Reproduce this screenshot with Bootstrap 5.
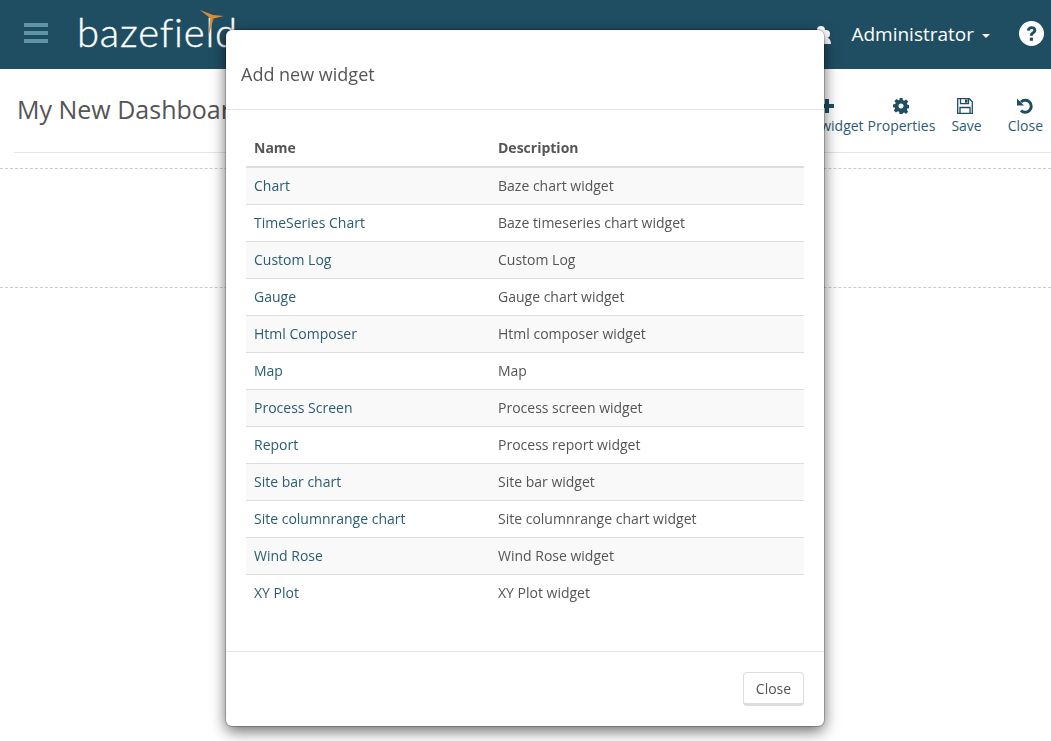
<!DOCTYPE html>
<html lang="en">
<head>
    <meta charset="UTF-8" />
    <meta name="viewport" content="width=device-width, initial-scale=1" />
    <title>Add new widget</title>
    <link href="https://cdn.jsdelivr.net/npm/bootstrap@5.3.3/dist/css/bootstrap.min.css" rel="stylesheet" />
    <style>
        body {
            font-family: "Open Sans", "Liberation Sans", sans-serif;
            font-size: 14px;
            color: #555;
            background: #fff;
            overflow: hidden;
        }
        .top-bar {
            height: 69px;
            background: #1f4e62;
            padding: 0 7px 0 24px;
        }
        .burger {
            width: 24px;
            gap: 4px;
            margin-top: -3px;
        }
        .burger span {
            display: block;
            height: 4px;
            background: #5f93a6;
        }
        .logo-wrap {
            margin-left: 29px;
            margin-top: -5px;
            position: relative;
        }
        .logo-text {
            font-family: Lato, "Open Sans", sans-serif;
            font-weight: 300;
            font-size: 40px;
            line-height: 1;
            color: #fff;
            letter-spacing: 0.8px;
            -webkit-text-stroke: 0.4px #fff;
        }
        .logo-mill {
            position: absolute;
            left: 122px;
            top: -5px;
        }
        .user-name {
            font-size: 19px;
            color: #fff;
            margin-left: 19px;
        }
        .user-caret {
            border-top: 4px solid #fff;
            border-left: 4px solid transparent;
            border-right: 4px solid transparent;
            margin-left: 8px;
            margin-top: 3px;
        }
        .help-icon {
            margin-left: 29px;
            margin-top: -2px;
        }
        .title-row {
            height: 84px;
            margin: 0 0 0 14px;
            border-bottom: 1px solid #e5e5e5;
            padding: 0 8px 0 3px;
        }
        .page-title {
            font-size: 25px;
            font-weight: 400;
            color: #555;
            margin: 0;
            padding-top: 25px;
        }
        .tool-btn {
            color: #2a5d73;
            font-size: 14px;
            line-height: 19px;
            text-decoration: none;
            padding-top: 29px;
        }
        .tool-btn svg {
            display: block;
            margin: 0 auto 2px;
        }
        .tool-add { margin-right: 4px; }
        .tool-props { margin-right: 16px; }
        .tool-save { margin-right: 26px; }
        .tool-save svg { transform: translateX(-2px); }
        .drop-row {
            border-bottom: 1px dashed #ccc;
        }
        .drop-first { height: 16px; }
        .drop-second { height: 119px; }
        .widget-modal {
            position: fixed;
            left: 226px;
            top: 30px;
            width: 598px;
            height: 696px;
            border: 0;
            border-radius: 6px;
            background: #fff;
            box-shadow: 0 0 0 1px rgba(0, 0, 0, .2), 0 5px 15px rgba(0, 0, 0, .6);
        }
        .widget-modal .modal-header {
            height: 80px;
            padding: 25px 15px 15px;
            border-bottom: 1px solid #e5e5e5;
        }
        .widget-modal .modal-title {
            font-size: 18px;
            line-height: 1.4;
            font-weight: 400;
            color: #555;
        }
        .widget-modal .modal-body {
            padding: 20px;
            flex: 1 1 auto;
        }
        .widget-modal .modal-footer {
            height: 75px;
            padding: 20px;
            border-top: 1px solid #e5e5e5;
        }
        .widget-table {
            --bs-table-striped-bg: #f9f9f9;
            --bs-table-striped-color: #555;
            --bs-table-color: #555;
            margin: 0;
            color: #555;
            table-layout: fixed;
        }
        .widget-table th,
        .widget-table td {
            padding: 8px;
            line-height: 20px;
            height: 37px;
            border-top: 1px solid #ddd;
            border-bottom: 0;
            font-size: 14px;
            color: #555;
        }
        .widget-table thead th {
            border-top: 0;
            border-bottom: 2px solid #ddd;
            height: 37px;
            font-weight: 700;
        }
        .widget-table > tbody {
            border-top: 0;
        }
        .widget-table tbody tr:first-child td {
            border-top: 0;
        }
        .widget-table a {
            color: #2a5d73;
            text-decoration: none;
        }
        .name-col { width: 244px; }
        .close-btn {
            font-size: 14px;
            line-height: 20px;
            color: #555;
            background: #fff;
            border: 1px solid #ddd;
            border-bottom: 3px solid #ddd;
            border-radius: 4px;
            width: 61px;
            height: 34px;
            padding: 6px 0 4px;
            margin: 0;
        }
    </style>
</head>
<body>

<nav class="navbar top-bar d-flex flex-nowrap align-items-center justify-content-between">
    <div class="d-flex align-items-center">
        <div class="burger d-flex flex-column"><span></span><span></span><span></span></div>
        <div class="logo-wrap">
            <span class="logo-text">bazefield</span>
            <svg class="logo-mill" width="28" height="34" viewBox="0 0 28 34">
                <path d="M1 3 L14 8 L25 9 L14.500 11.500 L9.500 29 L11 11 Z" fill="#e08a2e"/>
            </svg>
        </div>
    </div>
    <div class="d-flex align-items-center">
        <svg width="20" height="20" viewBox="0 0 20 20" fill="#fff">
            <circle cx="9" cy="5" r="4"/><circle cx="14" cy="9" r="4"/><path d="M8 11c5 0 11 1 11 8H7z"/>
        </svg>
        <span class="user-name">Administrator</span>
        <span class="user-caret"></span>
        <svg class="help-icon" width="25" height="25" viewBox="0 0 24 24">
            <circle cx="12" cy="12" r="12" fill="#fff"/>
            <path d="M7.600 9.200C7.800 6.600 9.600 5 12.200 5c2.600 0 4.400 1.600 4.400 3.800 0 1.700-.9 2.600-2.100 3.400-1 .7-1.200 1-1.200 2h-2.800c0-1.900.5-2.700 1.800-3.600.9-.6 1.400-1 1.400-1.700 0-.8-.6-1.300-1.500-1.300-1 0-1.700.6-1.800 1.700z" fill="#1f4e62"/>
            <rect x="10.400" y="16" width="3" height="3" fill="#1f4e62"/>
        </svg>
    </div>
</nav>

<div class="title-row d-flex justify-content-between">
    <h1 class="page-title">My New Dashboard</h1>
    <div class="d-flex">
        <a class="tool-btn text-center tool-add" href="#">
            <svg width="16" height="16" viewBox="0 0 16 16" fill="#1f4e62"><path d="M6 1h4v5h5v4h-5v5H6v-5H1V6h5z"/></svg>
            Add widget
        </a>
        <a class="tool-btn text-center tool-props" href="#">
            <svg width="16" height="16" viewBox="0 0 16 16" fill="#1f4e62"><path fill-rule="evenodd" d="M6.500 0h3l.4 2.200 1.300.6L13.100 1.500l2.100 2.100-1.300 1.900.5 1.300 2.200.4v3l-2.200.4-.5 1.300 1.300 1.900-2.100 2.100-1.900-1.300-1.300.5L9.500 16h-3l-.4-2.200-1.300-.5-1.900 1.300L.8 12.500l1.300-1.900-.5-1.300L0 9.500v-3l2.200-.4.500-1.300L1.400 3l2.100-2.100 1.900 1.300 1.300-.6zM8 5.500a2.500 2.500 0 1 0 0 5 2.500 2.500 0 0 0 0-5z"/></svg>
            Properties
        </a>
        <a class="tool-btn text-center tool-save" href="#">
            <svg width="16" height="16" viewBox="0 0 16 16" fill="none" stroke="#1f4e62" stroke-width="1.300"><path d="M.7.7h11.600l3 3v11.600H.7z"/><path d="M3.500.7v5h8v-5M3 15.300V9.500h10v5.800"/><rect x="8" y="1.500" width="2.500" height="3.200" fill="#1f4e62" stroke="none"/></svg>
            Save
        </a>
        <a class="tool-btn text-center" href="#">
            <svg width="16" height="16" viewBox="0 0 16 16" fill="none"><path d="M4 4A6 6 0 1 1 4 12.500" stroke="#1f4e62" stroke-width="3"/><path d="M0 .5v7h7z" fill="#1f4e62"/></svg>
            Close
        </a>
    </div>
</div>
<div class="drop-row drop-first"></div>
<div class="drop-row drop-second"></div>

<div class="modal-content widget-modal d-flex flex-column">
    <div class="modal-header">
        <h5 class="modal-title">Add new widget</h5>
    </div>
    <div class="modal-body">
        <table class="table table-striped widget-table">
            <thead>
            <tr><th class="name-col">Name</th><th>Description</th></tr>
            </thead>
            <tbody id="widget-rows"></tbody>
        </table>
    </div>
    <div class="modal-footer">
        <button type="button" class="btn close-btn">Close</button>
    </div>
</div>

<script>
    const widgets = [
        ["Chart", "Baze chart widget"],
        ["TimeSeries Chart", "Baze timeseries chart widget"],
        ["Custom Log", "Custom Log"],
        ["Gauge", "Gauge chart widget"],
        ["Html Composer", "Html composer widget"],
        ["Map", "Map"],
        ["Process Screen", "Process screen widget"],
        ["Report", "Process report widget"],
        ["Site bar chart", "Site bar widget"],
        ["Site columnrange chart", "Site columnrange chart widget"],
        ["Wind Rose", "Wind Rose widget"],
        ["XY Plot", "XY Plot widget"]
    ];

    document.getElementById("widget-rows").innerHTML = widgets
        .map(w => `<tr><td><a href="#">${w[0]}</a></td><td>${w[1]}</td></tr>`)
        .join("");
</script>
<script src="https://cdn.jsdelivr.net/npm/bootstrap@5.3.3/dist/js/bootstrap.bundle.min.js"></script>
</body>
</html>
